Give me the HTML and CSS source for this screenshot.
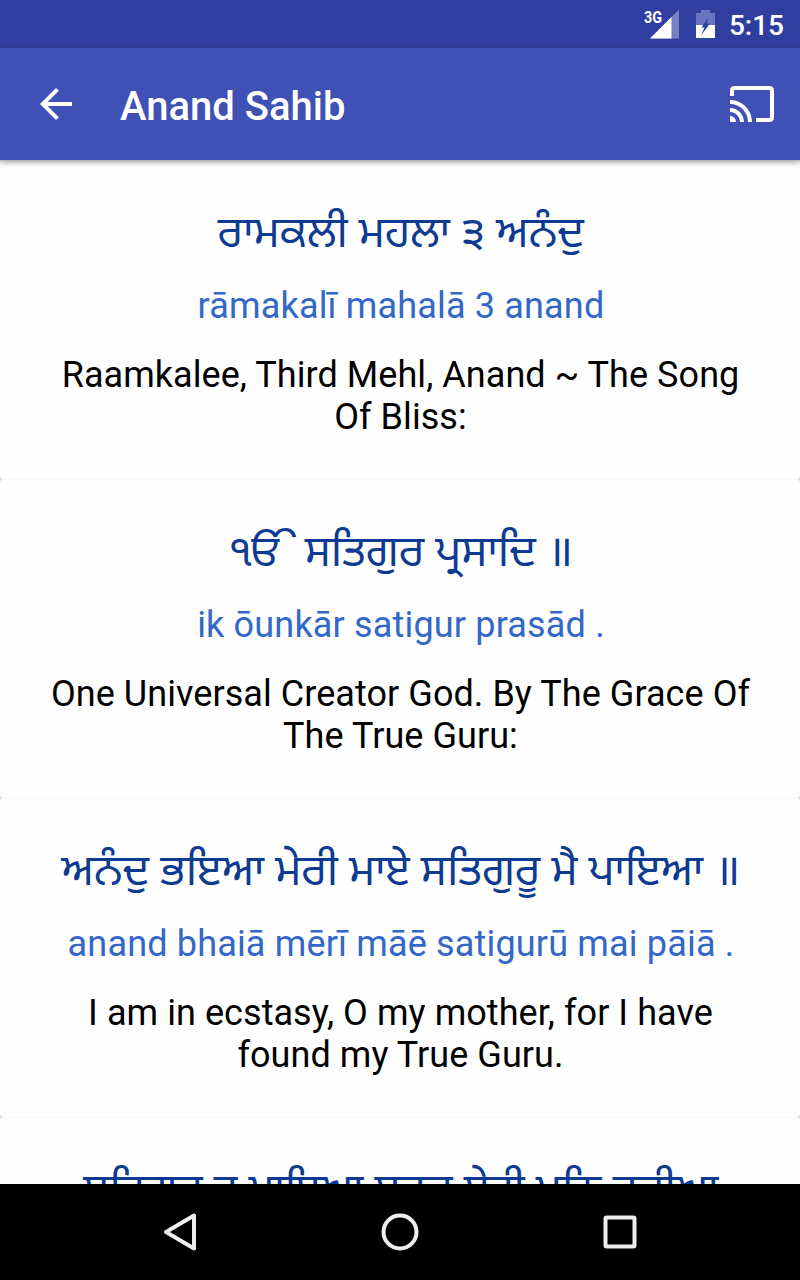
FILE: index.html
```html
<!DOCTYPE html>
<html lang="en">
  <head>
    <meta charset="UTF-8" />
    <meta name="viewport" content="width=device-width, initial-scale=1.0" />
    <title>Anand Sahib</title>
    <link rel="stylesheet" href="styles.css">
  </head>
  <body>
    <div class="statusbar">
      <svg class="signal" width="36" height="30" viewBox="0 0 36 30">
        <path d="M36 .5v29H7z" fill="#7782c4" />
        <path d="M28.500 8v21.500H7z" fill="#fff" />
        <text class="network" x="1" y="13.500" textLength="18" lengthAdjust="spacingAndGlyphs">3G</text>
      </svg>
      <svg class="battery" width="19" height="30" viewBox="0 0 19 30">
        <path d="M0 4h5V1h9v3h5v12H0z" fill="#6974be" />
        <path d="M0 16h19v13H0z" fill="#fff" />
        <path d="M12.500 8L5.500 18.500h3L5 26.500l9-12h-3.500z" fill="#303f9f" />
      </svg>
      <span class="clock">5:15</span>
    </div>

    <div class="toolbar">
      <svg width="48" height="48" viewBox="0 0 24 24">
        <path d="M20 11H7.830l5.590-5.590L12 4l-8 8 8 8 1.410-1.410L7.830 13H20v-2z" fill="#fff" />
      </svg>
      <h1 class="title">Anand Sahib</h1>
      <svg width="48" height="48" viewBox="0 0 24 24">
        <path d="M21 3H3c-1.100 0-2 .9-2 2v3h2V5h18v14h-7v2h7c1.100 0 2-.9 2-2V5c0-1.100-.9-2-2-2zM1 18v3h3c0-1.660-1.340-3-3-3zm0-4v2c2.760 0 5 2.240 5 5h2c0-3.870-3.130-7-7-7zm0-4v2c4.970 0 9 4.030 9 9h2c0-6.080-4.930-11-11-11z" fill="#fff" />
      </svg>
    </div>

    <div class="list">
      <div class="card">
        <p class="gurmukhi" lang="pa">ਰਾਮਕਲੀ ਮਹਲਾ ੩ ਅਨੰਦੁ</p>
        <p class="translit">rāmakalī mahalā 3 anand</p>
        <p class="english">Raamkalee, Third Mehl, Anand ~ The Song Of Bliss:</p>
      </div>
      <div class="card">
        <p class="gurmukhi" lang="pa">ੴ ਸਤਿਗੁਰ ਪ੍ਰਸਾਦਿ ॥</p>
        <p class="translit">ik ōunkār satigur prasād .</p>
        <p class="english">One Universal Creator God. By The Grace Of The True Guru:</p>
      </div>
      <div class="card">
        <p class="gurmukhi" lang="pa">ਅਨੰਦੁ ਭਇਆ ਮੇਰੀ ਮਾਏ ਸਤਿਗੁਰੂ ਮੈ ਪਾਇਆ ॥</p>
        <p class="translit">anand bhaiā mērī māē satigurū mai pāiā .</p>
        <p class="english">I am in ecstasy, O my mother, for I have found my True Guru.</p>
      </div>
      <div class="card">
        <p class="gurmukhi" lang="pa">ਸਤਿਗੁਰੁ ਤ ਪਾਇਆ ਸਹਜ ਸੇਤੀ ਮਨਿ ਵਜੀਆ</p>
      </div>
    </div>

    <div class="navbar">
      <svg width="40" height="40" viewBox="0 0 40 40">
        <path d="M34 3.500v33L6 20z" />
      </svg>
      <svg width="40" height="40" viewBox="0 0 40 40">
        <circle cx="20" cy="20" r="16.500" />
      </svg>
      <svg width="40" height="40" viewBox="0 0 40 40">
        <rect x="5.500" y="5.500" width="29" height="29" rx="1" />
      </svg>
    </div>
  </body>
</html>
```
FILE: styles.css
```css
body {
  margin: 0;
  height: 1280px;
  display: flex;
  flex-direction: column;
  overflow: hidden;
  background-color: #fefefe;
  font-family: Roboto, "Noto Sans Gurmukhi", "Noto Sans", sans-serif;
}

svg {
  display: block;
  flex: none;
  overflow: visible;
}

.statusbar {
  height: 48px;
  flex: none;
  display: flex;
  align-items: center;
  justify-content: flex-end;
  padding-right: 16px;
  box-sizing: border-box;
  background-color: #303f9f;
  color: #fff;
}

.network {
  font-size: 17px;
  font-weight: 700;
  fill: #fff;
}

.battery {
  margin: 0 14px 0 17px;
}

.clock {
  font-size: 28px;
  font-weight: 500;
  padding-top: 2px;
}

.toolbar {
  height: 112px;
  flex: none;
  display: flex;
  align-items: center;
  padding: 0 24px 0 32px;
  box-sizing: border-box;
  background-color: #3f51b5;
  box-shadow: 0 2px 6px rgba(0, 0, 0, 0.4);
  z-index: 1;
}

.title {
  flex: 1;
  margin: 4px 0 0 40px;
  color: #fff;
  font-size: 40px;
  font-weight: 500;
}

.list {
  flex: 1;
  min-height: 0;
  overflow: hidden;
  background-color: #ddd;
}

.card {
  height: 319px;
  padding: 41px 39px 0 40px;
  box-sizing: border-box;
  border-top: 1px solid #f9f9f9;
  border-radius: 4px;
  background-color: #fefefe;
  text-align: center;
}

.card p {
  margin: 0;
  font-size: 36px;
  line-height: 42px;
}

.card .gurmukhi {
  height: 83px;
  padding-left: 1px;
  color: #0d3b91;
  font-size: 43.9px;
  line-height: 60px;
  white-space: nowrap;
}

.card .translit {
  height: 69px;
  padding-left: 1px;
  color: #3367c8;
  letter-spacing: 0.17px;
}

.card .english {
  letter-spacing: 0.06px;
}

.navbar {
  height: 96px;
  flex: none;
  display: flex;
  align-items: center;
  justify-content: center;
  gap: 180px;
  background-color: #000;
}

.navbar svg {
  fill: none;
  stroke: #eee;
  stroke-width: 4;
  stroke-linejoin: round;
}
```
